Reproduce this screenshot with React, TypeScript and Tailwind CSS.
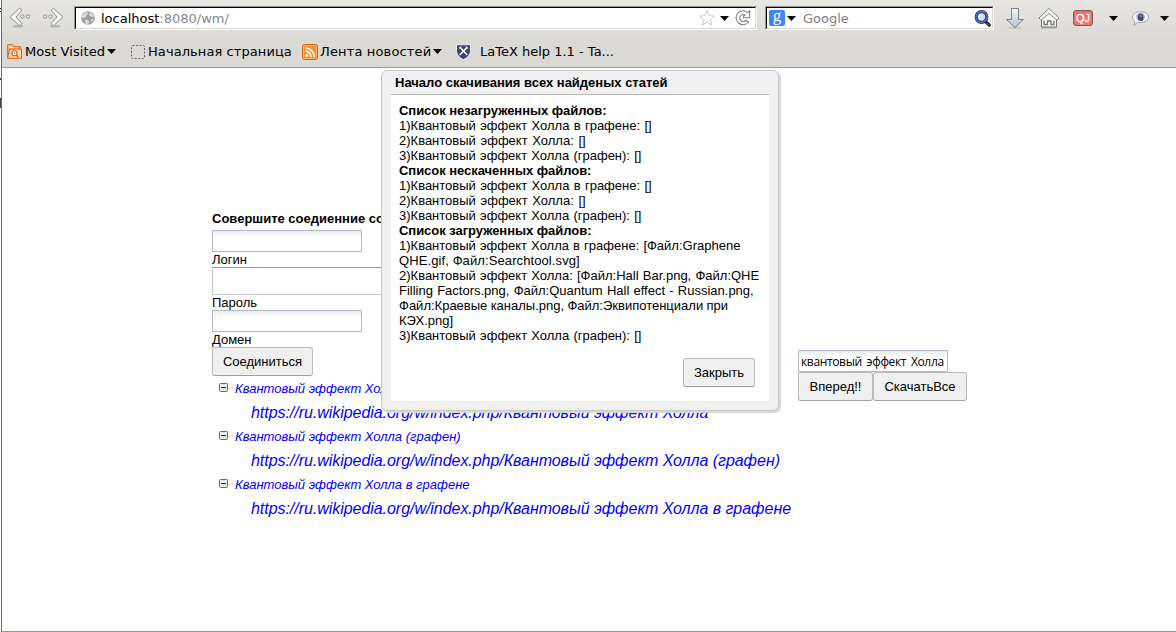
import React from 'react';

const Caret = ({ className = '' }: { className?: string }) => (
  <svg className={`h-[5px] w-[9px] shrink-0 ${className}`} viewBox="0 0 9 5">
    <path d="M0 0h9L4.5 5z" fill="#000" />
  </svg>
);

const BackIcon = () => (
  <svg className="h-[22px] w-[22px] shrink-0" viewBox="0 0 22 22">
    <ellipse cx="10" cy="19.3" rx="5.5" ry="1.3" fill="#b4b4b0" />
    <path d="M11.5 1.2 14 3.2 8 10l6 6.600-2.500 2.200L2.200 10z" fill="#f8f8f6" stroke="#8d8d8a" strokeLinejoin="round" />
    <circle cx="14.400" cy="9.500" r="1.700" fill="#f1f1ef" stroke="#858582" strokeWidth=".9" />
    <circle cx="20" cy="9.500" r="1.700" fill="#f1f1ef" stroke="#858582" strokeWidth=".9" />
  </svg>
);

const ForwardIcon = () => (
  <svg className="h-[22px] w-[22px] shrink-0" viewBox="0 0 22 22">
    <ellipse cx="12" cy="19.3" rx="5.5" ry="1.3" fill="#b4b4b0" />
    <path d="M10.500 1.200 8 3.200 14 10l-6 6.600 2.500 2.200L19.800 10z" fill="#f8f8f6" stroke="#8d8d8a" strokeLinejoin="round" />
    <circle cx="7.600" cy="9.500" r="1.700" fill="#f1f1ef" stroke="#858582" strokeWidth=".9" />
    <circle cx="2" cy="9.500" r="1.700" fill="#f1f1ef" stroke="#858582" strokeWidth=".9" />
  </svg>
);

const GlobeIcon = () => (
  <svg className="h-[14px] w-[14px] shrink-0" viewBox="0 0 14 14">
    <circle cx="7" cy="7" r="6.8" fill="#a0a0a0" />
    <path d="M2 3.2 5.5 1l1.6 1.3-1 1.6L4.7 5l.6 1.6-1.8-.4L1.6 7.5.8 5.8zM8.5 1.2l3 1.8 1.3 2.4-2 .6-1.3-1-1.4-.4zM4 8.6l3 .5 1.4 1.6-1.6 2.6-2-.3-.5-2zM10 8l2.5-.2-.8 2.4-1.3 1z" fill="#d9d9d9" />
  </svg>
);

const StarIcon = () => (
  <svg className="h-[16px] w-[16px] shrink-0" viewBox="0 0 16 16">
    <path d="m8 .8 2.1 4.8 5.3.5-4 3.6 1.2 5.3L8 12.2 3.4 15l1.2-5.3-4-3.6 5.3-.5z" fill="#fff" stroke="#c8c8c8" strokeLinejoin="round" />
  </svg>
);

const ReloadIcon = () => (
  <svg className="h-[16px] w-[16px] shrink-0" viewBox="0 0 16 16">
    <path
      d="M12.800 2.600 14.700.700v7H8.500V6l1.700-.700A3.400 3.400 0 1 0 10.800 10.300l2.900 1.700A7 7 0 1 1 12.800 2.600z"
      fill="#fff"
      stroke="#808080"
      strokeWidth="1.100"
      strokeLinejoin="round"
    />
  </svg>
);

const SearchIcon = () => (
  <svg className="h-[17px] w-[17px] shrink-0" viewBox="0 0 17 17">
    <path d="m11.5 11.5 3.700 3.700" stroke="#222" strokeWidth="3.200" strokeLinecap="round" />
    <path d="m12.800 13.200 2 2" stroke="#888" strokeWidth="1" />
    <circle cx="7.500" cy="7" r="5.300" fill="#d3dcec" stroke="#23356f" strokeWidth="3.200" />
    <circle cx="7.500" cy="7" r="5.500" fill="none" stroke="#5b7ccb" strokeWidth="1.300" />
    <path d="M4.800 7A3 3 0 0 1 7.500 4.500" fill="none" stroke="#fff" strokeWidth="1.600" />
  </svg>
);

const DownloadIcon = () => (
  <svg className="h-[22px] w-[20px] shrink-0" viewBox="0 0 20 22">
    <defs>
      <linearGradient id="down" x1="0" y1="0" x2="0" y2="1">
        <stop offset="0" stopColor="#f5f7f7" />
        <stop offset="1" stopColor="#b3c1c8" />
      </linearGradient>
    </defs>
    <ellipse cx="10" cy="20.8" rx="7" ry="1.2" fill="#c9c9c5" />
    <path d="M6.500 1.500h7v11h5L10 20.500 1.500 12.500h5z" fill="url(#down)" stroke="#7b8385" strokeLinejoin="round" />
  </svg>
);

const HomeIcon = () => (
  <svg className="h-[22px] w-[22px] shrink-0" viewBox="0 0 22 22">
    <ellipse cx="11" cy="20.8" rx="9" ry="1.2" fill="#c0c0bc" />
    <path d="M3.500 11v9h15v-9L11 5z" fill="#f7f7f5" stroke="#777774" />
    <path d="M11 1.500 1 11l2 2.200L11 6.500l8 6.700 2-2.200z" fill="#fbfbfa" stroke="#858582" strokeLinejoin="round" />
    <path d="M6 13.500v4h3.500v-3.500h3.500v3.500H16v-4" fill="none" stroke="#777774" strokeWidth="1.300" />
  </svg>
);

const BubbleIcon = () => (
  <svg className="h-[15px] w-[17px] shrink-0" viewBox="0 0 17 15">
    <path d="M8.500.6c4.500 0 7.900 2.400 7.900 5.400s-3.400 5.500-7.900 5.500c-1 0-2-.1-2.800-.3L2 14.300l.8-4.100C1.400 9.200.6 7.700.6 6c0-3 3.400-5.400 7.900-5.400z" fill="#fafafa" stroke="#a2a2a2" />
    <ellipse cx="8.500" cy="5.800" rx="4.500" ry="4.300" fill="#aab5d0" />
    <path d="M6 9V4.500l2-2 2.500.8 1 2.700-.5 3.500-1.800.5z" fill="#41496e" />
    <circle cx="8.800" cy="5" r="1.100" fill="#b49482" />
  </svg>
);

const FolderIcon = () => (
  <svg className="h-[15px] w-[15px] shrink-0" viewBox="0 0 15 15">
    <path d="M.7 14.200V.7h5.100l1 2h6.500v3" fill="#f3c391" stroke="#cf6418" />
    <path d="M.7 14.300 2.500 5h12v9.300z" fill="#f6d1a8" stroke="#cf6418" />
    <path d="M2.500 3.500h3" stroke="#fff" />
    <circle cx="7.500" cy="9.200" r="2.500" fill="#fff" stroke="#cf6418" strokeWidth="1.100" />
    <circle cx="7.500" cy="9.200" r=".8" fill="#cf6418" />
    <path d="m9.300 11 2 2.200" stroke="#cf6418" strokeWidth="1.400" />
  </svg>
);

const RssIcon = () => (
  <svg className="h-[16px] w-[16px] shrink-0" viewBox="0 0 16 16">
    <rect x=".5" y=".5" width="15" height="15" rx="2" fill="#f6912e" stroke="#dc6207" />
    <rect x="1.500" y="1.500" width="13" height="13" rx="1" fill="none" stroke="#fbb974" />
    <circle cx="4.700" cy="11.500" r="1.400" fill="#fff" />
    <path d="M3.300 7.200A5.600 5.600 0 0 1 9 12.900M3.300 4A8.900 8.900 0 0 1 12.200 12.900" fill="none" stroke="#fff" strokeWidth="1.700" />
  </svg>
);

const ShieldIcon = () => (
  <svg className="h-[16px] w-[15px] shrink-0" viewBox="0 0 15 16">
    <path d="M.5.700h14V6c0 5-3 7.800-7 9.600C3.500 13.800.5 11 .5 6z" fill="#39446f" stroke="#f3f3f3" />
    <path d="m3.700 3 7.600 8M11.300 3l-7.600 8" stroke="#fff" strokeWidth="1.500" />
    <path d="m2.800 4.800 2.700-2.600M12.200 4.800 9.500 2.200" stroke="#dfe2ee" />
  </svg>
);

const MinusBox = () => (
  <svg className="-mt-[2px] h-[9px] w-[9px] shrink-0" viewBox="0 0 9 9">
    <rect x=".5" y=".5" width="8" height="8" rx="1" fill="#e9ebf0" stroke="#666b85" />
    <path d="M2 4.500h5" stroke="#1b2d7a" />
  </svg>
);

const Button = ({ children, className = '' }: { children: React.ReactNode; className?: string }) => (
  <button
    className={`h-[29px] shrink-0 whitespace-nowrap rounded-[3px] border border-[#bbb] border-b-[#a0a0a0] bg-[#f0f0f0] text-center text-[13px] leading-[27px] ${className}`}
  >
    {children}
  </button>
);

const TextBox = ({ value = '', className = '' }: { value?: string; className?: string }) => (
  <input
    type="text"
    defaultValue={value}
    className={`block h-[22px] w-[150px] border border-[#b5b8c8] bg-linear-to-b from-[#e9eeee] from-0% to-white to-30% px-[2px] outline-none ${className}`}
  />
);

type Line = { text: string; spacing: string };

const missing: Line[] = [
  { text: '1)Квантовый эффект Холла в графене: []', spacing: '[word-spacing:0.7px]' },
  { text: '2)Квантовый эффект Холла: []', spacing: '[word-spacing:1.1px]' },
  { text: '3)Квантовый эффект Холла (графен): []', spacing: '[word-spacing:0.6px]' },
];

const loaded: Line[] = [
  { text: '1)Квантовый эффект Холла в графене: [Файл:Graphene', spacing: '[word-spacing:0.5px]' },
  { text: 'QHE.gif, Файл:Searchtool.svg]', spacing: 'tracking-[0.1px]' },
  { text: '2)Квантовый эффект Холла: [Файл:Hall Bar.png, Файл:QHE', spacing: '[word-spacing:0.6px]' },
  { text: 'Filling Factors.png, Файл:Quantum Hall effect - Russian.png,', spacing: '[word-spacing:0.6px]' },
  { text: 'Файл:Краевые каналы.png, Файл:Эквипотенциали при', spacing: '[word-spacing:-0.3px]' },
  { text: 'КЭХ.png]', spacing: '' },
  { text: '3)Квантовый эффект Холла (графен): []', spacing: '[word-spacing:0.6px]' },
];

const sections = [
  { title: 'Список незагруженных файлов:', lines: missing },
  { title: 'Список нескаченных файлов:', lines: missing },
  { title: 'Список загруженных файлов:', lines: loaded },
];

const results = ['Квантовый эффект Холла', 'Квантовый эффект Холла (графен)', 'Квантовый эффект Холла в графене'];

const Chrome = () => (
  <header className="h-[68px] border-b border-[#9c9c94] bg-linear-to-b from-[#e7e6e3] to-[#dad9d4] to-60% font-['DejaVu_Sans',sans-serif] text-[13px] text-black">
    <div className="flex h-9 items-center pl-[6px]">
      <BackIcon />
      <div className="w-[13px]" />
      <ForwardIcon />
      <div className="ml-[9px] flex h-6 w-[683px] items-center border border-b-white border-l-[#9a9994] border-r-white border-t-[#9a9994]">
        <div className="flex h-[22px] w-full items-center border border-b-[#d9d8d4] border-l-black border-r-[#d9d8d4] border-t-black bg-white pl-[5px] pr-[4px]">
          <GlobeIcon />
          <span className="ml-[6px] flex-1 pt-px text-[#888]">
            <span className="text-black">localhost</span>:8080/wm/
          </span>
          <StarIcon />
          <Caret className="ml-[5px] mr-[6px]" />
          <ReloadIcon />
        </div>
      </div>
      <div className="ml-2 flex h-6 w-[229px] items-center border border-b-white border-l-[#9a9994] border-r-white border-t-[#9a9994]">
        <div className="flex h-[22px] w-full items-center border border-b-[#d9d8d4] border-l-black border-r-[#d9d8d4] border-t-black bg-white pl-[2px] pr-[1px]">
          <span className="flex h-4 w-4 items-center justify-center rounded-[2px] bg-[#4285f4] pb-[5px] font-['Liberation_Serif',serif] text-[17px] leading-4 text-white">
            g
          </span>
          <Caret className="ml-[2px]" />
          <span className="ml-[7px] flex-1 pt-px text-[#808080]">Google</span>
          <SearchIcon />
        </div>
      </div>
      <div className="ml-[11px] flex items-center">
        <DownloadIcon />
        <div className="w-[13px]" />
        <HomeIcon />
        <span className="ml-[13px] flex h-4 w-5 items-center justify-center rounded-[3px] border border-[#8d5552] bg-[#ec716f] font-['Liberation_Sans',sans-serif] text-[11px] leading-none text-white [-webkit-text-stroke:0.4px_white]">
          QJ
        </span>
        <Caret className="ml-[16px] mr-[14px]" />
        <BubbleIcon />
        <Caret className="ml-[11px]" />
      </div>
    </div>
    <div className="flex h-[31px] items-center whitespace-nowrap pl-[5px]">
      <FolderIcon />
      <span className="ml-[3px] w-[82px] tracking-[0.08px]">Most Visited</span>
      <Caret />
      <svg className="ml-[15px] h-[14px] w-[14px] shrink-0" viewBox="0 0 14 14">
        <rect x=".5" y=".5" width="13" height="13" rx="1" fill="none" stroke="#666" strokeDasharray="2 1.500" />
      </svg>
      <span className="ml-[3px] w-[154px] tracking-[0.08px]">Начальная страница</span>
      <RssIcon />
      <span className="ml-[2px] w-[113px] tracking-[0.15px]">Лента новостей</span>
      <Caret />
      <div className="w-[14px]" />
      <ShieldIcon />
      <span className="ml-[9px]">LaTeX help 1.1 - Ta...</span>
    </div>
  </header>
);

const Dialog = () => (
  <section className="absolute left-[379px] top-[2px] h-[341px] w-[398px] rounded-[6px] border border-[#c8c8c8] bg-[#f0f0f0] px-[9px] pb-[9px] shadow-[2px_2px_1px_#d8d8d8]">
    <h1 className="h-6 border-b border-[#b8b8b8] pl-[4px] text-[13px] font-bold leading-[24px]">
      Начало скачивания всех найденых статей
    </h1>
    <div className="h-[306px] bg-white px-2 pt-2 text-[13px] leading-[15px]">
      {sections.map((s) => (
        <div key={s.title} className="whitespace-nowrap">
          <p className="font-bold tracking-[-0.04px]">{s.title}</p>
          {s.lines.map((l) => (
            <p key={l.text} className={l.spacing}>
              {l.text}
            </p>
          ))}
        </div>
      ))}
      <div className="mt-[15px] flex justify-end pr-[6px]">
        <Button className="w-[72px]">Закрыть</Button>
      </div>
    </div>
  </section>
);

export default function App() {
  return (
    <div className="flex h-[632px] w-[1176px] overflow-hidden bg-white font-['Liberation_Sans',sans-serif] text-[13px] text-black">
      <div className="flex w-[2px] shrink-0 flex-col border-r border-[#5f7186] pt-[8px]">
        <div className="h-px bg-black" />
        <div className="mt-[2px] h-px bg-black" />
        <div className="mt-[66px] h-[2px] bg-[#444]" />
        <div className="mt-[18px] h-[10px] bg-[#444]" />
      </div>
      <div className="flex flex-1 flex-col">
        <Chrome />
        <main className="relative flex-1 border-b border-[#96968a]">
          <div className="flex pl-[210px] pt-[143px]">
            <div className="w-[586px] shrink-0">
              <p className="h-[20px] whitespace-nowrap font-bold leading-[15px]">Совершите соедиенние со</p>
              <TextBox className="-mt-px" />
              <p className="h-[15px] leading-[16px]">Логин</p>
              <div className="h-[28px] w-[250px] border border-[#c8c8c8] border-t-[#999]" />
              <p className="h-[15px] leading-[16px]">Пароль</p>
              <TextBox />
              <p className="h-[15px] leading-[16px]">Домен</p>
              <Button className="block w-[101px]">Соединиться</Button>
              <ul className="pl-[7px] italic text-[#0000ff]">
                {results.map((r) => (
                  <li key={r} className="h-[48px] whitespace-nowrap">
                    <div className="flex h-6 items-center">
                      <MinusBox />
                      <span className="ml-[7px] pt-[2px] leading-[24px]">{r}</span>
                    </div>
                    <a className="block pl-[32px] text-[16px] leading-[26px] tracking-[-0.045px]">
                      https://ru.wikipedia.org/w/index.php/{r}
                    </a>
                  </li>
                ))}
              </ul>
            </div>
            <div className="pt-[139px]">
              <TextBox
                value="квантовый эффект Холла"
                className="font-['Open_Sans',sans-serif] text-[12px] tracking-[-0.35px] [word-spacing:2px]"
              />
              <div className="flex">
                <Button className="w-[75px]">Вперед!!</Button>
                <Button className="w-[94px]">СкачатьВсе</Button>
              </div>
            </div>
          </div>
          <Dialog />
        </main>
      </div>
    </div>
  );
}
